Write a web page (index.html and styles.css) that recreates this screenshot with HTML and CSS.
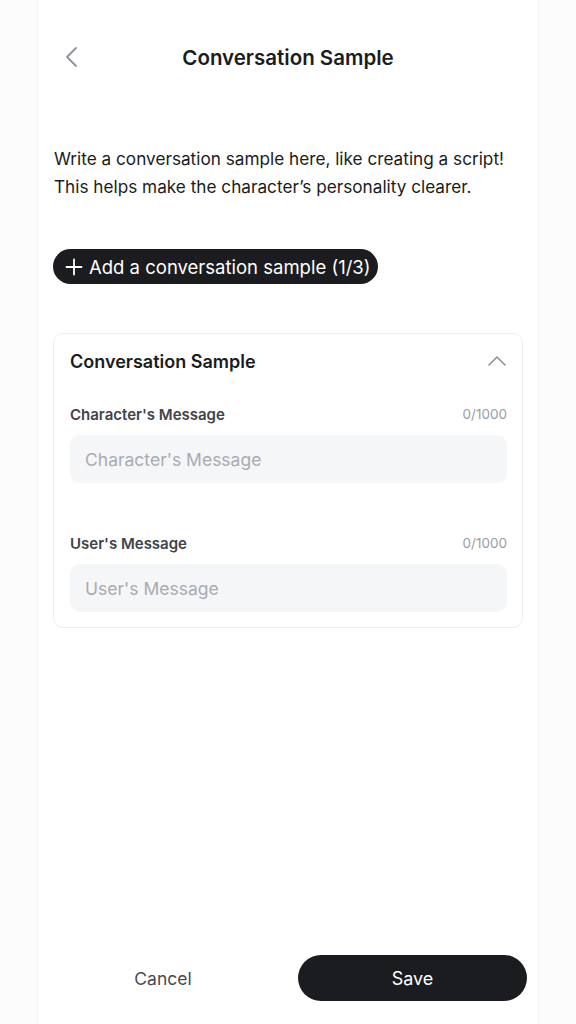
FILE: index.html
```html
<!DOCTYPE html>
<html lang="en">
<head>
<meta charset="utf-8">
<title>Conversation Sample</title>
<link rel="stylesheet" href="styles.css">
</head>
<body>
<div class="page">
  <header class="topbar">
    <button class="back" aria-label="Back">
      <svg width="14" height="22" viewBox="0 0 14 22"><path d="M12 2 L3 11 L12 20" fill="none" stroke="#8e919b" stroke-width="1.8" stroke-linecap="round" stroke-linejoin="round"/></svg>
    </button>
    <h1 class="title">Conversation Sample</h1>
  </header>
  <main class="content">
    <p class="desc">Write a conversation sample here, like creating a script!<br>This helps make the character’s personality clearer.</p>
    <div class="add-row">
      <button class="add-btn"><svg width="18" height="18" viewBox="0 0 18 18"><path d="M9 1.5 V16.5 M1.5 9 H16.5" stroke="#fff" stroke-width="1.8" stroke-linecap="round"/></svg><span>Add a conversation sample (1/3)</span></button>
    </div>
    <section class="card">
      <div class="card-head">
        <h2 class="card-title">Conversation Sample</h2>
        <svg width="18" height="11" viewBox="0 0 18 11"><path d="M1 10 L9 2 L17 10" fill="none" stroke="#8e919b" stroke-width="1.6" stroke-linecap="round" stroke-linejoin="round"/></svg>
      </div>
      <div class="field">
        <div class="field-top"><span class="label">Character's Message</span><span class="count">0/1000</span></div>
        <div class="input">Character's Message</div>
      </div>
      <div class="field field-2">
        <div class="field-top"><span class="label">User's Message</span><span class="count">0/1000</span></div>
        <div class="input">User's Message</div>
      </div>
    </section>
  </main>
  <footer class="footer">
    <button class="cancel">Cancel</button>
    <button class="save">Save</button>
  </footer>
</div>
</body>
</html>
```
FILE: styles.css
```css
* { box-sizing: border-box; }
html, body { margin: 0; padding: 0; }
body {
  background: #fcfcfd;
  font-family: Inter, "Open Sans", sans-serif;
  color: #1b1c20;
}
.page {
  width: 502px;
  margin: 0 auto;
  min-height: 1024px;
  background: #ffffff;
  border-left: 1px solid #f4f4f6;
  border-right: 1px solid #f4f4f6;
  display: flex;
  flex-direction: column;
}
button { font-family: inherit; border: 0; background: none; padding: 0; cursor: pointer; }
.topbar {
  height: 114px;
  display: flex;
  align-items: center;
  position: relative;
  padding-left: 26px;
}
.back { width: 14px; height: 22px; display: flex; }
.title {
  position: absolute;
  left: 0; right: 0;
  text-align: center;
  margin: 0;
  font-size: 20.5px;
  font-weight: 600;
  color: #1b1c20;
  pointer-events: none;
}
.content {
  padding: 31px 15px 0 15px;
  flex: 1;
}
.desc {
  margin: 0;
  padding-left: 1px;
  font-size: 17.2px;
  line-height: 28px;
  color: #1b1c20;
}
.add-row { margin-top: 48px; display: flex; }
.add-btn {
  height: 35px;
  border-radius: 18px;
  background: #1b1c20;
  color: #fff;
  display: flex;
  align-items: center;
  gap: 6px;
  padding: 0 7px 0 12px;
  font-size: 18.5px;
  font-weight: 400;
}
.card {
  margin-top: 49px;
  border: 1px solid #eeeff2;
  border-radius: 10px;
  padding: 14px 15px 15px 16px;
}
.card-head {
  height: 26px;
  display: flex;
  align-items: center;
  justify-content: space-between;
}
.card-head svg { margin-right: 1px; margin-top: -2px; }
.card-title { margin: 0; font-size: 18px; font-weight: 600; color: #1b1c20; }
.field { margin-top: 30px; }
.field-2 { margin-top: 50px; }
.field-top {
  height: 20px;
  display: flex;
  align-items: center;
  justify-content: space-between;
}
.label { font-size: 15px; font-weight: 600; color: #41434b; }
.count { font-size: 13.5px; color: #9a9ca4; }
.input {
  margin-top: 11px;
  height: 48px;
  border-radius: 10px;
  background: #f5f6f8;
  display: flex;
  align-items: center;
  padding-left: 15px;
  font-size: 17.5px;
  color: #a8abb3;
}
.footer {
  height: 46px;
  display: flex;
  align-items: center;
  padding: 0 11px 0 0;
  margin-bottom: 23px;
}
.cancel {
  width: 250px;
  height: 46px;
  font-size: 17.5px;
  color: #474a52;
}
.save {
  margin-left: auto;
  width: 229px;
  height: 46px;
  border-radius: 23px;
  background: #1b1c20;
  color: #fff;
  font-size: 18px;
  font-weight: 400;
}
```
